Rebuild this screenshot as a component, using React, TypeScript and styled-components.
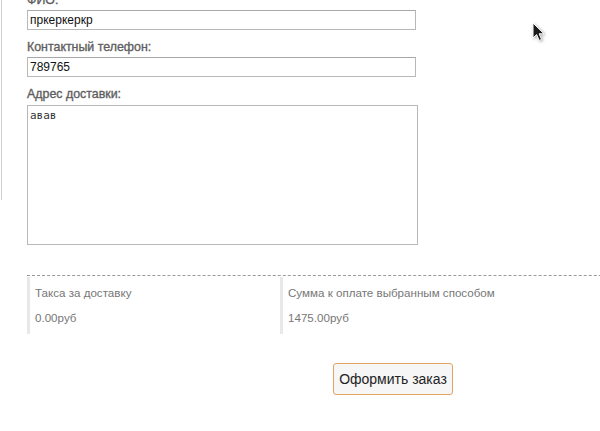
import React from "react";
import styled, { createGlobalStyle } from "styled-components";

const Global = createGlobalStyle`
  html, body { margin: 0; padding: 0; background: #fff; overflow: hidden; }
  body { font-family: "Liberation Sans", Arial, sans-serif; }
`;

const Page = styled.div`
  position: relative;
  display: flex;
  align-items: flex-start;
  width: 600px;
  height: 431px;
  overflow: hidden;
`;

const Sidebar = styled.div`
  width: 1px;
  height: 200px;
  flex: 0 0 auto;
  border-right: 1px solid #cfcfcf;
`;

const Main = styled.div`
  flex: 1;
  padding-left: 25px;
  min-width: 0;
`;

const Form = styled.div`
  margin-top: -17px;
  display: flex;
  flex-direction: column;
`;

const Label = styled.label`
  display: block;
  margin: 10px 0 2px;
  font-size: 12.4px;
  line-height: 15px;
  font-weight: normal;
  color: #5e5e5e;
  -webkit-text-stroke: 0.35px #5e5e5e;
`;

const TextInput = styled.input`
  box-sizing: border-box;
  width: 389px;
  height: 20px;
  margin: 0;
  padding: 0 2px;
  border: 1px solid #b8b8b8;
  border-top-color: #a8a8a8;
  font-family: "Liberation Sans", Arial, sans-serif;
  font-size: 12px;
  color: #111;
  background: #fff;
  outline: none;
`;

const TextArea = styled.textarea`
  box-sizing: border-box;
  width: 391px;
  height: 140px;
  margin: 1px 0 0;
  padding: 3px 2px;
  border: 1px solid #b8b8b8;
  font-family: "DejaVu Sans Mono", "Liberation Mono", monospace;
  font-size: 11px;
  color: #333;
  resize: none;
  outline: none;
  display: block;
`;

const Summary = styled.div`
  margin-top: 30px;
  border-top: 1px dashed #9a9a9a;
  padding-top: 1px;
  display: grid;
  grid-template-columns: 253px 1fr;
  width: 640px;
`;

const SumBox = styled.div`
  border-left: 3px solid #e8e8e8;
  padding: 8px 5px 9px;
  font-size: 11.6px;
  color: #777;
  white-space: nowrap;
`;

const SumLabel = styled.div`
  line-height: 15px;
`;

const SumValue = styled.div`
  line-height: 15px;
  margin-top: 10px;
`;

const ButtonRow = styled.div`
  padding: 29px 0 0 306px;
`;

const OrderButton = styled.button`
  box-sizing: border-box;
  width: 120px;
  height: 32px;
  border: 1px solid #e3a462;
  border-radius: 3px;
  background: #f6f6f6;
  font-family: "Liberation Sans", Arial, sans-serif;
  font-size: 14px;
  color: #222;
  padding: 0;
  cursor: pointer;
`;

const Cursor = styled.svg`
  position: absolute;
  left: 531px;
  top: 21px;
  width: 18px;
  height: 22px;
  filter: drop-shadow(1px 1px 1.5px rgba(0, 0, 0, 0.35));
`;

export default function App() {
  return (
    <>
      <Global />
      <Page>
        <Sidebar />
        <Main>
          <Form>
            <Label>ФИО:</Label>
            <TextInput defaultValue="пркеркеркр" />
            <Label>Контактный телефон:</Label>
            <TextInput defaultValue="789765" />
            <Label>Адрес доставки:</Label>
            <TextArea defaultValue="авав" />
          </Form>
          <Summary>
            <SumBox>
              <SumLabel>Такса за доставку</SumLabel>
              <SumValue>0.00руб</SumValue>
            </SumBox>
            <SumBox>
              <SumLabel>Сумма к оплате выбранным способом</SumLabel>
              <SumValue>1475.00руб</SumValue>
            </SumBox>
          </Summary>
          <ButtonRow>
            <OrderButton>Оформить заказ</OrderButton>
          </ButtonRow>
        </Main>
        <Cursor viewBox="0 0 18 22">
          <path
            d="M2 2 L2 17 L5.6 13.6 L8.2 19.4 L10.6 18.4 L8.1 12.8 L13 12.8 Z"
            fill="#1a1a1a"
            stroke="#ffffff"
            strokeWidth="1"
            strokeLinejoin="round"
          />
        </Cursor>
      </Page>
    </>
  );
}
